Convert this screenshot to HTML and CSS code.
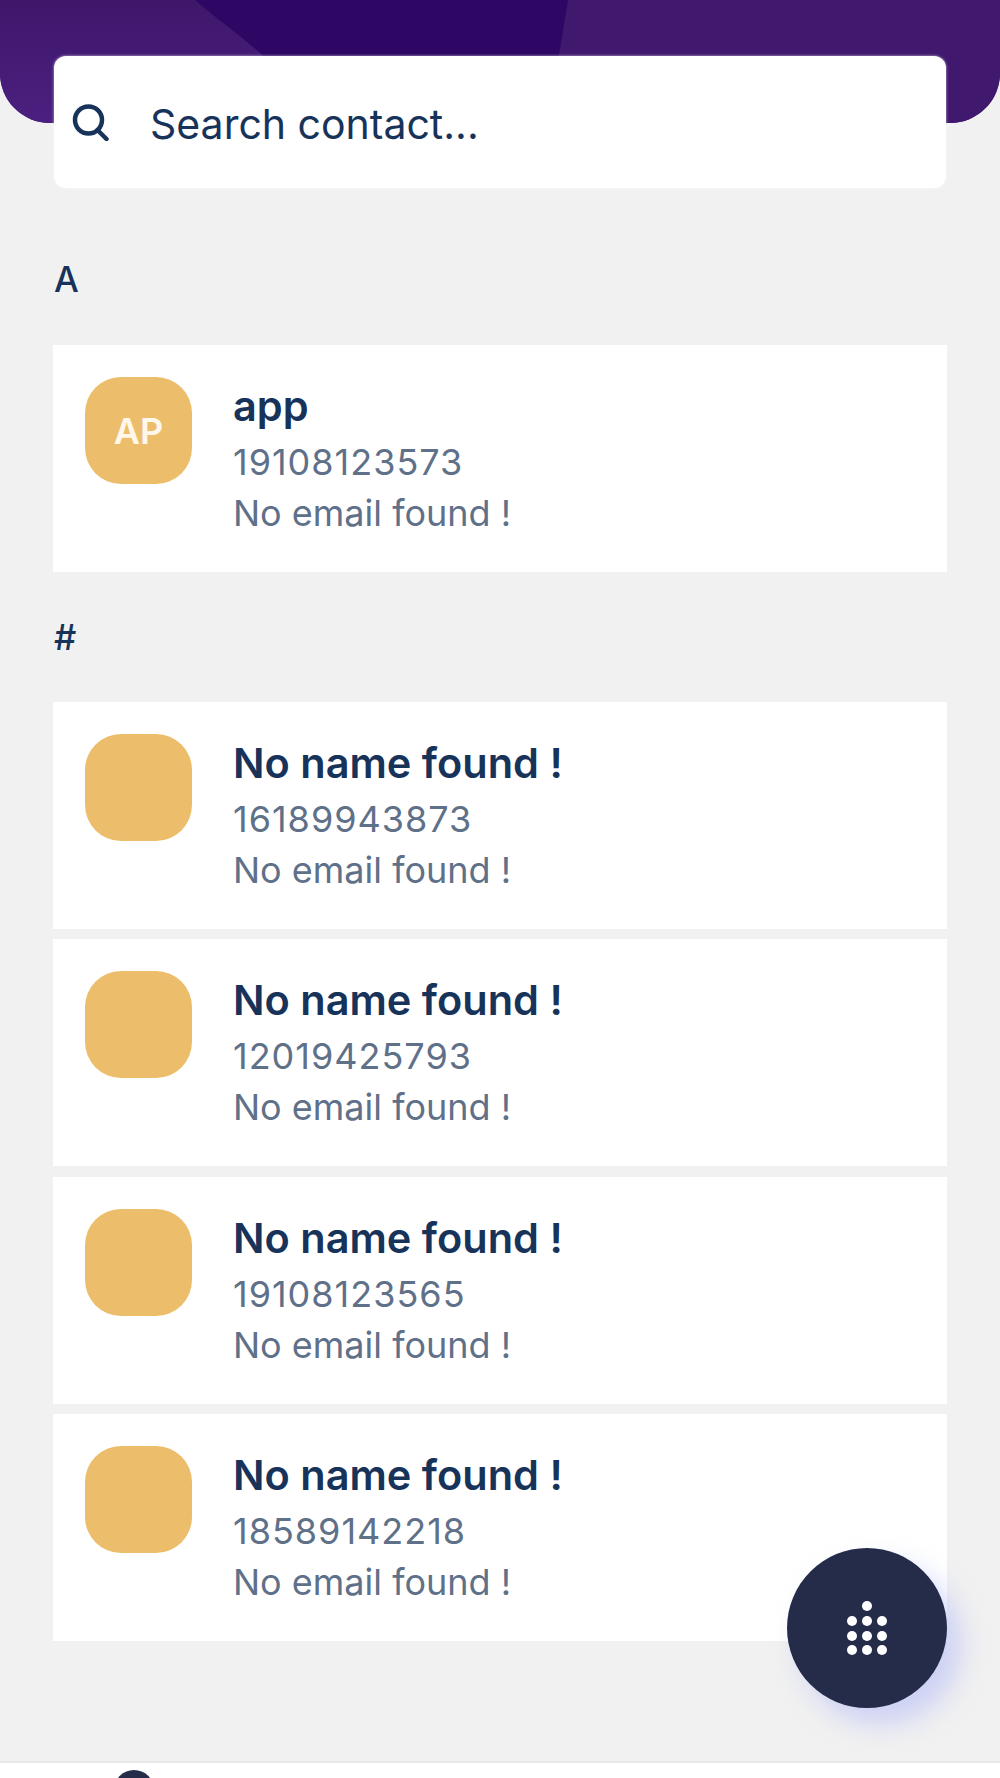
FILE: index.html
```html
<!DOCTYPE html>
<html lang="en">
<head>
<meta charset="utf-8">
<title>Contacts</title>
<link rel="stylesheet" href="styles.css">
</head>
<body>
<div class="page">
  <header class="hero">
    <svg class="hero-art" viewBox="0 0 1000 123" preserveAspectRatio="none" aria-hidden="true">
      <defs>
        <linearGradient id="heroFade" x1="0" y1="0" x2="0" y2="1">
          <stop offset="0" stop-color="#3e176b"/>
          <stop offset="1" stop-color="#4b2080"/>
        </linearGradient>
      </defs>
      <path fill="url(#heroFade)" d="M0 0H195C215 18 245 38 265 58L290 123H0Z"/>
      <path class="hero-shape" d="M568 0H1000V123H548Z"/>
    </svg>
  </header>
  <main class="content">
    <div class="search">
      <svg class="search-icon" viewBox="0 0 38 38" aria-hidden="true">
        <circle cx="17.5" cy="17" r="13.5"/>
        <path d="M26.5 27L35.5 36"/>
      </svg>
      <span class="search-text">Search contact...</span>
    </div>

    <div class="letter letter-first">A</div>
    <div class="contact">
      <div class="avatar">AP</div>
      <div class="info">
        <div class="name">app</div>
        <div class="detail phone">19108123573</div>
        <div class="detail">No email found !</div>
      </div>
    </div>

    <div class="letter">#</div>
    <div class="list">
      <div class="contact">
        <div class="avatar"></div>
        <div class="info">
          <div class="name">No name found !</div>
          <div class="detail phone">16189943873</div>
          <div class="detail">No email found !</div>
        </div>
      </div>
      <div class="contact">
        <div class="avatar"></div>
        <div class="info">
          <div class="name">No name found !</div>
          <div class="detail phone">12019425793</div>
          <div class="detail">No email found !</div>
        </div>
      </div>
      <div class="contact">
        <div class="avatar"></div>
        <div class="info">
          <div class="name">No name found !</div>
          <div class="detail phone">19108123565</div>
          <div class="detail">No email found !</div>
        </div>
      </div>
      <div class="contact">
        <div class="avatar"></div>
        <div class="info">
          <div class="name">No name found !</div>
          <div class="detail phone">18589142218</div>
          <div class="detail">No email found !</div>
        </div>
      </div>
    </div>
  </main>
  <button class="fab" type="button" aria-label="Dial pad">
    <svg viewBox="0 0 40 54" aria-hidden="true">
      <circle cx="20" cy="5" r="5"/>
      <circle cx="5" cy="20" r="5"/><circle cx="20" cy="20" r="5"/><circle cx="35" cy="20" r="5"/>
      <circle cx="5" cy="35" r="5"/><circle cx="20" cy="35" r="5"/><circle cx="35" cy="35" r="5"/>
      <circle cx="5" cy="49" r="5"/><circle cx="20" cy="49" r="5"/><circle cx="35" cy="49" r="5"/>
    </svg>
  </button>
  <nav class="tabbar"><span class="tab-dot"></span></nav>
</div>
</body>
</html>
```

FILE: styles.css
```css
* { box-sizing: border-box; }
html, body { margin: 0; padding: 0; }
body {
  font-family: Inter, "Noto Sans", sans-serif;
  color: #18335a;
  background: #f1f1f1;
}
.page {
  position: relative;
  width: 1000px;
  height: 1778px;
  overflow: hidden;
  display: flex;
  flex-direction: column;
}
.hero {
  position: relative;
  flex: none;
  height: 123px;
  background: #2e0664;
  border-radius: 0 0 50px 50px;
  overflow: hidden;
}
.hero-art { position: absolute; inset: 0; width: 100%; height: 100%; display: block; }
.hero-shape { fill: #40196e; }
.content {
  flex: 1;
  min-height: 0;
  padding: 0 53px;
}
.search {
  display: flex;
  align-items: center;
  gap: 41px;
  height: 132px;
  margin: -67px 1px 0;
  padding: 0 0 0 17px;
  background: #fff;
  border-radius: 12px;
  position: relative;
  box-shadow: 0 0 3px rgba(255, 255, 255, 0.7);
}
.search-icon {
  width: 38px;
  height: 38px;
  flex: none;
  fill: none;
  stroke: #18335a;
  stroke-width: 4.5;
  stroke-linecap: round;
}
.search-text { font-size: 41px; line-height: 48px; margin-top: 4px; color: #18335a; }
.letter { font-size: 35px; font-weight: 500; line-height: 42px; margin: 44px 1px; color: #18335a; }
.letter-first { margin-top: 70px; margin-bottom: 45px; }
.list { display: flex; flex-direction: column; gap: 10.4px; }
.contact {
  display: flex;
  gap: 41px;
  height: 227px;
  padding: 32px 32px 0;
  background: #fff;
}
.avatar {
  flex: none;
  width: 107px;
  height: 107px;
  border-radius: 36px;
  background: #ecbe6b;
  color: #fff8ea;
  font-size: 36px;
  font-weight: 600;
  display: flex;
  align-items: center;
  justify-content: center;
}
.info { display: flex; flex-direction: column; padding-top: 4px; }
.name { font-size: 41.5px; font-weight: 600; line-height: 50px; margin-bottom: 6px; color: #18335a; }
.detail { font-size: 36px; line-height: 51px; color: #5f7089; }
.phone { letter-spacing: 1px; }
.fab {
  position: absolute;
  left: 787px;
  top: 1548px;
  width: 160px;
  height: 160px;
  padding: 0;
  border: 0;
  border-radius: 50%;
  background: #252c4a;
  box-shadow: 14px 16px 26px rgba(170, 180, 250, 0.5);
  display: flex;
  align-items: center;
  justify-content: center;
}
.fab svg { width: 40px; height: 54px; fill: #fff; display: block; }
.tabbar {
  position: absolute;
  left: 0;
  right: 0;
  bottom: 0;
  height: 17px;
  background: #fff;
  border-top: 2px solid #e8e8e8;
  overflow: hidden;
}
.tab-dot {
  position: absolute;
  left: 114px;
  top: 7px;
  width: 40px;
  height: 40px;
  border-radius: 50%;
  background: #252c4a;
}
```
